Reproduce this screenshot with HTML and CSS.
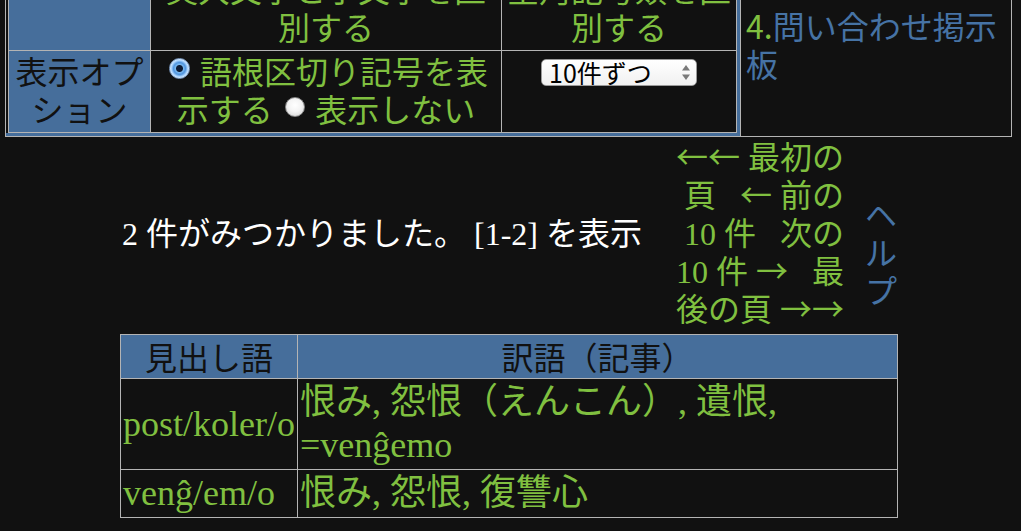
FILE: index.html
```html
<!DOCTYPE html>
<html lang="ja">
<head>
<meta charset="utf-8">
<title>検索結果</title>
<link rel="stylesheet" href="styles.css">
</head>
<body>
<div class="page">
  <div class="form-wrap">
    <div class="form-left">
      <div class="opts">
        <div class="cell label"></div>
        <div class="cell opt">英大文字と小文字を区別する</div>
        <div class="cell opt">全角記号類を区別する</div>
        <div class="cell label">表示オプション</div>
        <div class="cell opt">
          <label><input type="radio" name="sep" class="radio" checked> 語根区切り記号を表示する</label>
          <label><input type="radio" name="sep" class="radio"> 表示しない</label>
        </div>
        <div class="cell opt top">
          <span class="select">
            <select class="select-el"><option>10件ずつ</option></select>
            <svg class="select-arrows" width="8" height="15" viewBox="0 0 8 15"><polygon points="4,0 8,5.5 0,5.5" fill="#7a7a7a"/><polygon points="0,9.5 8,9.5 4,15" fill="#7a7a7a"/></svg>
          </span>
        </div>
      </div>
    </div>
    <div class="form-right">
      <span class="num">4.</span><a href="#" class="link">問い合わせ掲示板</a>
    </div>
  </div>

  <div class="info">
    <div class="count">2 件がみつかりました。 [1-2] を表示</div>
    <div class="pager"><a href="#"><span class="arr">←←</span> 最初の<br>頁</a>&nbsp;&nbsp;&nbsp;<a href="#"><span class="arr">←</span> 前の<br>10 件</a>&nbsp;&nbsp;&nbsp;<a href="#">次の<br>10 件 <span class="arr">→</span></a>&nbsp;&nbsp;&nbsp;<a href="#">最<br>後の頁 <span class="arr">→→</span></a></div>
    <a href="#" class="help">ヘルプ</a>
  </div>

  <table class="results">
    <colgroup><col class="col-hw"><col class="col-tr"></colgroup>
    <tr><th>見出し語</th><th>訳語（記事）</th></tr>
    <tr><td>post/koler/o</td><td>恨み, 怨恨（えんこん）, 遺恨, =venĝemo</td></tr>
    <tr><td>venĝ/em/o</td><td>恨み, 怨恨, 復讐心</td></tr>
  </table>
</div>
</body>
</html>
```

FILE: styles.css
```css
html, body {
  margin: 0;
  background: #111111;
}

body {
  color: #80c040;
  font-family: "Liberation Serif", "Noto Sans CJK JP", serif;
}

a {
  color: inherit;
  text-decoration: none;
}

.page {
  margin-top: -36px;
  padding-left: 5px;
}

/* ---------- top option form ---------- */
.form-wrap {
  display: flex;
  width: 1007px;
  box-sizing: border-box;
  border: 1px solid #b4b4b4;
  font-family: "Noto Sans CJK JP", sans-serif;
  font-size: 32px;
  line-height: 38px;
}

.form-left {
  padding-left: 2px;
  border-top: 3px solid #466e9b;
  border-right: 3px solid #466e9b;
  border-bottom: 3px solid #466e9b;
}

.opts {
  display: grid;
  grid-template-columns: 141px 350px 234px;
  gap: 1px;
  background: #b4b4b4;
  border: 1px solid #b4b4b4;
}

.cell {
  padding: 0 2px 5px;
  text-align: center;
  background: #111111;
}

.label {
  background: #466e9b;
  color: #111111;
}

.opt {
  color: #80c040;
}

.radio {
  appearance: none;
  -webkit-appearance: none;
  width: 20px;
  height: 20px;
  margin: 0 3px 0 5px;
  border-radius: 50%;
  vertical-align: 5px;
  box-sizing: border-box;
  border: 1px solid #8a8a8a;
  background: radial-gradient(circle at 50% 40%, #ffffff 0, #f4f4f4 45%, #cfcfcf 100%);
}

.radio:checked {
  width: 21px;
  height: 21px;
  border: 1px solid #7d9cc4;
  background: radial-gradient(circle, #0d1a33 0, #0d1a33 3px, #7ab8f0 4px, #4f94de 6px, #a9d3ff 8px, #e8f4ff 10px);
}

.top {
  padding-top: 8px;
}

.select {
  position: relative;
  display: inline-block;
  width: 156px;
  height: 27px;
  box-sizing: border-box;
  border: 1px solid #9a9a9a;
  border-radius: 5px;
  background: linear-gradient(#ffffff, #f1f1f1);
  vertical-align: top;
}

.select-el {
  appearance: none;
  -webkit-appearance: none;
  display: block;
  width: 100%;
  height: 25px;
  margin: 0;
  padding: 0 0 0 7px;
  border: 0;
  background: transparent;
  color: #000000;
  font-family: "Noto Sans CJK JP", sans-serif;
  font-size: 25px;
  line-height: 25px;
}

.select-arrows {
  position: absolute;
  right: 6px;
  top: 5px;
}

.form-right {
  flex: 1;
  padding: 41px 4px 4px 5px;
  border-left: 1px solid #b4b4b4;
}

.num {
  color: #80c040;
}

.link {
  color: #4673a5;
}

/* ---------- result count / pager ---------- */
.info {
  display: flex;
  align-items: center;
  width: 778px;
  box-sizing: border-box;
  margin: 2px 0 0 115px;
  padding: 0 1px 0 2px;
  font-size: 32px;
  line-height: 38px;
}

.count {
  flex: 1;
  color: #ffffff;
}

.pager {
  width: 170px;
  text-align: right;
  color: #80c040;
}

.arr {
  font-family: "Noto Sans CJK JP", sans-serif;
  line-height: 0;
}

.help {
  width: 32px;
  margin: 34px 0 0 21px;
  color: #4673a5;
  font-family: "Noto Sans CJK JP", sans-serif;
}

/* ---------- results table ---------- */
.results {
  margin: 5px 0 0 115px;
  width: 778px;
  table-layout: fixed;
  border-collapse: collapse;
  border: 1px solid #b4b4b4;
}

.col-hw {
  width: 177px;
}

.results th,
.results td {
  border: 1px solid #b4b4b4;
  padding: 2px 2px;
}

.results th {
  background: #466e9b;
  color: #111111;
  font-weight: normal;
  font-family: "Noto Sans CJK JP", sans-serif;
  font-size: 32px;
  line-height: 39px;
  text-align: center;
}

.results td {
  color: #80c040;
  font-size: 36px;
  line-height: 43px;
  text-align: left;
  vertical-align: middle;
}
```
